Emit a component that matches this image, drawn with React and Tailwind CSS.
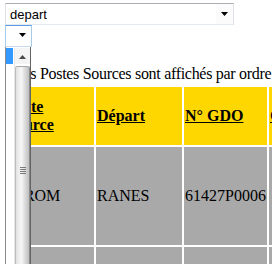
export default function App() {
  const rows = [{ poste: "DIROM", depart: "RANES", gdo: "61427P0006", commune: "" }];

  return (
    <div className="relative w-[272px] h-[264px] overflow-hidden bg-white text-black">
      {/* first select (closed) */}
      <div className="ml-[5px] mt-[3px] w-[229px] h-[22px] flex items-center bg-white border border-[#abadb3] border-x-[#dfe1e8] border-b-[#e3e9ef] font-['Liberation_Sans',Arial,sans-serif] text-[13px] leading-[15px]">
        <span className="flex-1 pl-[4px]">depart</span>
        <div className="w-[17px] h-full flex items-center justify-center bg-[#fbfbfb]">
          <svg width="7" height="4" viewBox="0 0 7 4">
            <path d="M0 0h7L3.5 4z" fill="#000" />
          </svg>
        </div>
      </div>

      {/* second select (open) */}
      <div className="ml-[5px] w-[27px] h-[22px] flex items-center justify-end bg-white border border-[#569de5] border-x-[#a8cbe9] border-b-[#c5dcf0]">
        <div className="w-[17px] h-full flex items-center justify-center -mt-[2px]">
          <svg width="7" height="4" viewBox="0 0 7 4">
            <path d="M0 0h7L3.5 4z" fill="#000" />
          </svg>
        </div>
      </div>

      <p className="ml-[14px] mt-[18px] whitespace-nowrap font-['Liberation_Serif','Times_New_Roman',serif] text-[16px] leading-[18px] tracking-[-0.3px]">
        Les Postes Sources sont affichés par ordre alphabétique :
      </p>

      <table className="ml-[4px] mt-[2px] w-[367px] table-fixed border-separate border-spacing-[2px] font-['Liberation_Serif','Times_New_Roman',serif] text-[16px] leading-[18px]">
        <thead>
          <tr className="h-[58px] bg-[#ffd700]">
            <th className="w-[88px] p-px text-left font-bold">
              <u>Poste Source</u>
            </th>
            <th className="w-[86px] p-px text-left font-bold">
              <u>Départ</u>
            </th>
            <th className="w-[83px] p-px text-left font-bold">
              <u>N° GDO</u>
            </th>
            <th className="p-px text-left font-bold">
              <u>Commune</u>
            </th>
          </tr>
        </thead>
        <tbody>
          {rows.map((r) => (
            <tr key={r.gdo} className="h-[98px] bg-[#a9a9a9]">
              <td className="p-px">{r.poste}</td>
              <td className="p-px">{r.depart}</td>
              <td className="p-px">{r.gdo}</td>
              <td className="p-px">{r.commune}</td>
            </tr>
          ))}
          <tr className="h-[98px] bg-[#a9a9a9]">
            <td className="p-px"></td>
            <td className="p-px"></td>
            <td className="p-px"></td>
            <td className="p-px"></td>
          </tr>
        </tbody>
      </table>

      {/* open dropdown list of the second select */}
      <div className="absolute left-[5px] top-[47px] w-[26px] h-[230px] flex bg-white border-x border-l-[#8a8a8a] border-r-[#646464] pt-px">
        <div className="w-[8px]">
          <div className="w-[7px] h-[16px] bg-[#3399ff]" />
        </div>
        <div className="flex-1 flex flex-col border-l border-[#e8e8e8]">
          <div className="h-[16px] flex items-center justify-center pt-[2px] bg-[#f4f4f4]">
            <svg width="7" height="4" viewBox="0 0 7 4">
              <path d="M0 4h7L3.5 0z" fill="#4a4a4a" />
            </svg>
          </div>
          <div className="mt-[2px] flex-1 flex flex-col items-center rounded-t-[2px] border border-l-[#bcbcbc] border-t-[#a8a8a8] border-r-[#8c8c8c] bg-linear-to-r from-[#e2e2e2] via-[#f7f7f7] via-40% to-[#bfbfbf]">
            <div className="mt-[100px] flex flex-col gap-[1px]">
              <div className="w-[6px] h-px bg-[#7a7a7a]" />
              <div className="w-[6px] h-px bg-[#7a7a7a]" />
              <div className="w-[6px] h-px bg-[#7a7a7a]" />
              <div className="w-[6px] h-px bg-[#7a7a7a]" />
            </div>
          </div>
        </div>
      </div>
    </div>
  );
}
